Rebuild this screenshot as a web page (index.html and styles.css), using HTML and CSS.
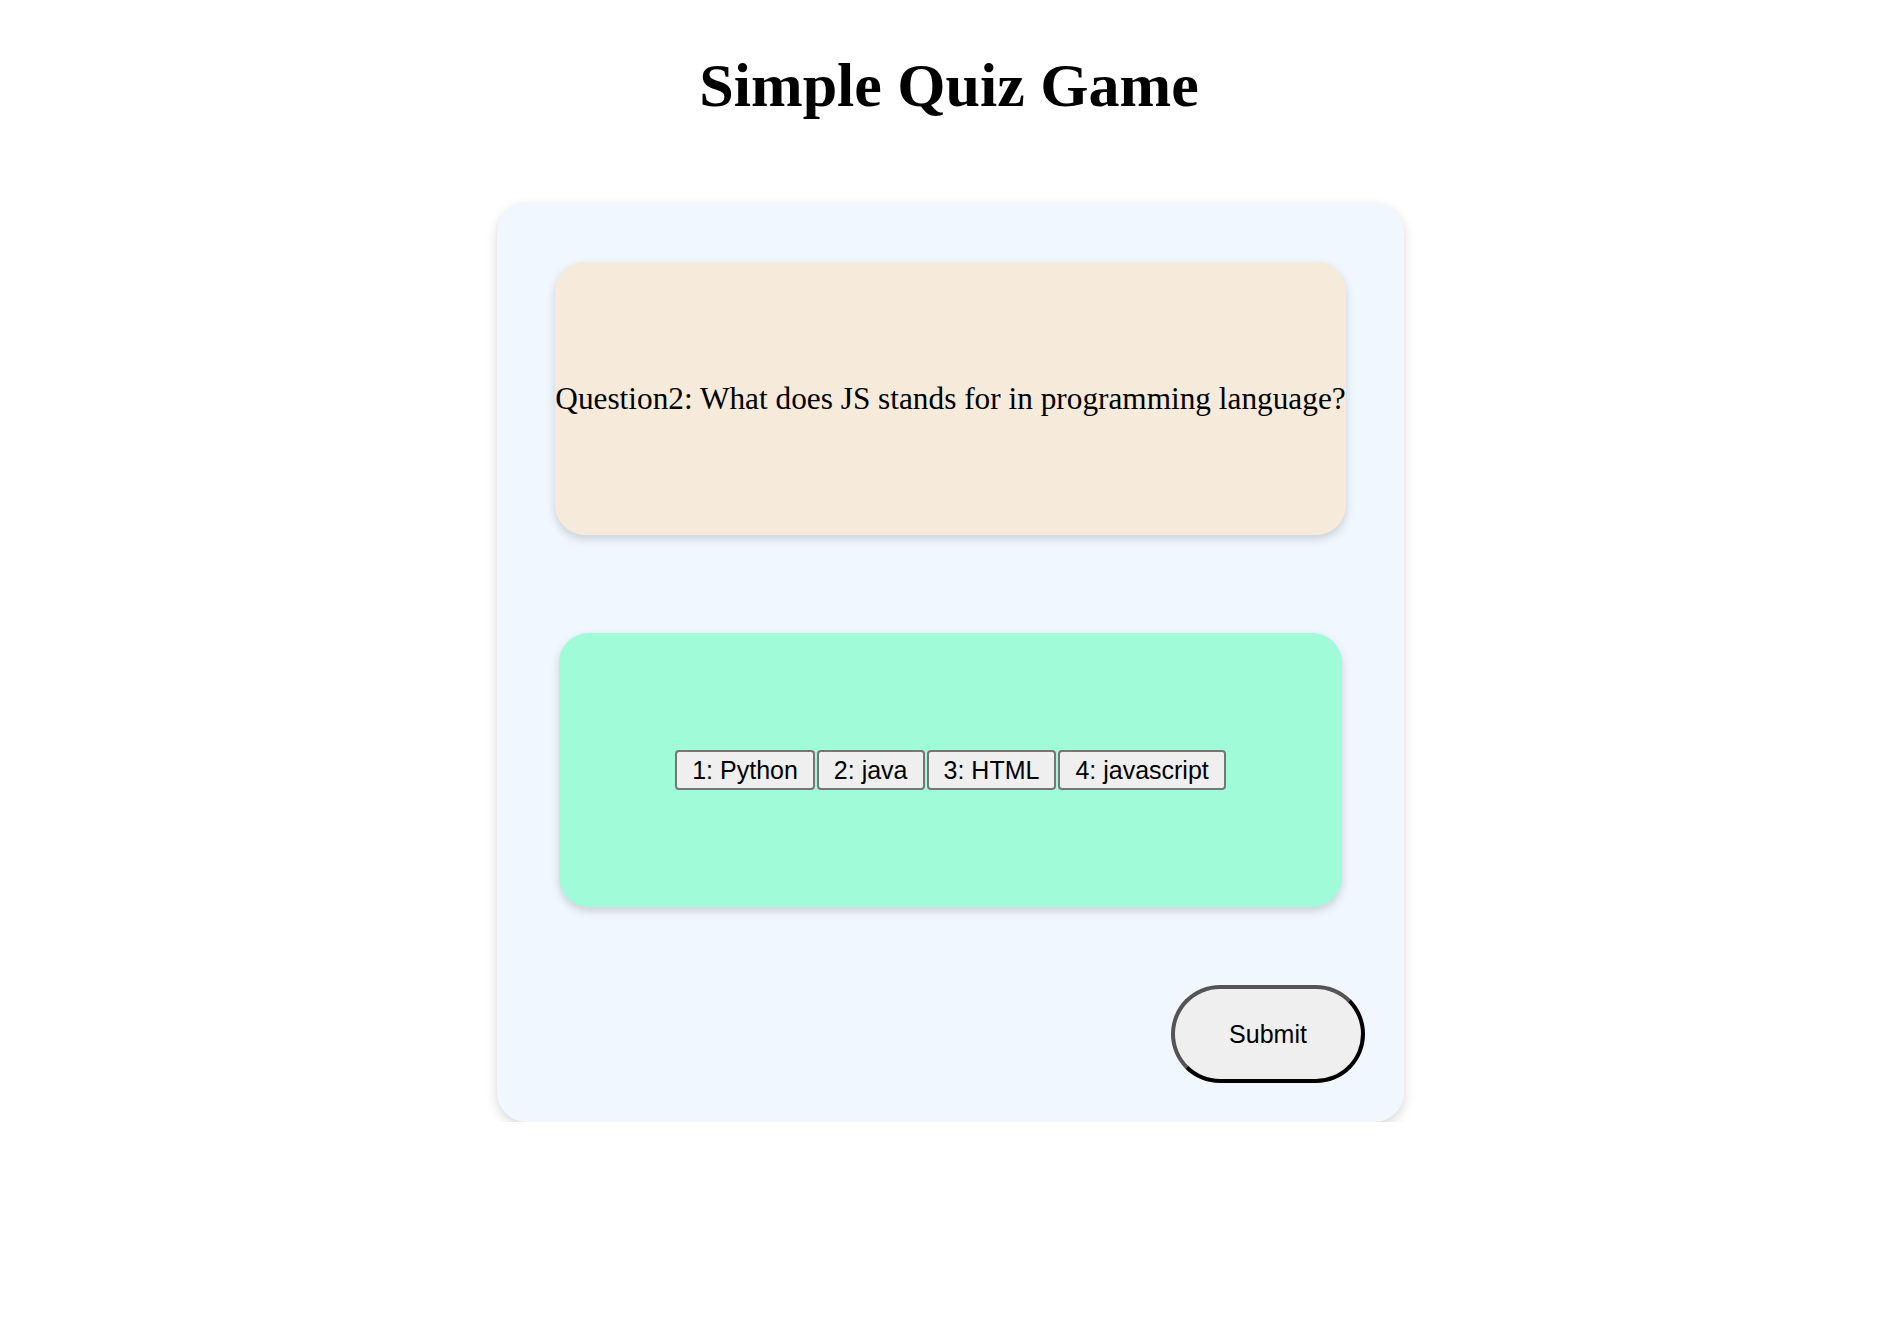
FILE: index.html
```html
<!DOCTYPE html>
<html lang="en">
<head>
<meta charset="utf-8">
<title>Simple Quiz Game</title>
<link rel="stylesheet" href="styles.css">
</head>
<body>
  <h1 class="title">Simple Quiz Game</h1>
  <main class="stage">
    <section class="quiz-card">
      <div class="question-box">
        <p class="question">Question2: What does JS stands for in programming language?</p>
      </div>
      <div class="options-box">
        <div class="options">
          <button class="option" type="button">1: Python</button>
          <button class="option" type="button">2: java</button>
          <button class="option" type="button">3: HTML</button>
          <button class="option" type="button">4: javascript</button>
        </div>
      </div>
      <div class="actions">
        <button class="submit" type="button">Submit</button>
      </div>
    </section>
  </main>
</body>
</html>
```
FILE: styles.css
```css
html, body {
  margin: 0;
  padding: 0;
  background: #ffffff;
}

body {
  font-family: "Liberation Serif", "Times New Roman", serif;
  color: #000;
}

.title {
  margin: 52px 0 0;
  font-size: 62px;
  font-weight: bold;
  text-align: center;
  line-height: 66px;
  padding-left: 20px;
}

.stage {
  display: flex;
  justify-content: center;
  padding-left: 23px;
  margin-top: 85px;
}

.quiz-card {
  width: 907px;
  box-sizing: border-box;
  background: #f0f7fe;
  border-radius: 30px;
  box-shadow: 0 4px 12px rgba(0, 0, 0, 0.16);
  padding: 59px 39px 39px;
  display: flex;
  flex-direction: column;
  align-items: center;
}

.question-box {
  width: fit-content;
  height: 273px;
  background: #f6ebda;
  border-radius: 30px;
  box-shadow: 0 4px 10px rgba(0, 0, 0, 0.16);
  display: flex;
  align-items: center;
  justify-content: center;
}

.question {
  margin: 0;
  font-size: 31.3px;
  line-height: 34px;
  white-space: nowrap;
}

.options-box {
  margin-top: 98px;
  width: 783px;
  height: 274px;
  background: #a0fbd8;
  border-radius: 30px;
  box-shadow: 0 4px 10px rgba(0, 0, 0, 0.16);
  display: flex;
  align-items: center;
  justify-content: center;
}

.options {
  display: flex;
  gap: 2px;
}

.option {
  font-family: "Liberation Sans", Arial, sans-serif;
  font-size: 25px;
  line-height: 28px;
  height: 40px;
  padding: 0 15px;
  border: 2px solid #767676;
  border-radius: 4px;
  background: #efefef;
  color: #000;
}

.actions {
  margin-top: 78px;
  align-self: stretch;
  display: flex;
  justify-content: flex-end;
}

.submit {
  width: 194px;
  height: 98px;
  font-family: "Liberation Sans", Arial, sans-serif;
  font-size: 25px;
  color: #000;
  background: #efefef;
  border: 4px outset #000;
  border-radius: 49px;
}
```
